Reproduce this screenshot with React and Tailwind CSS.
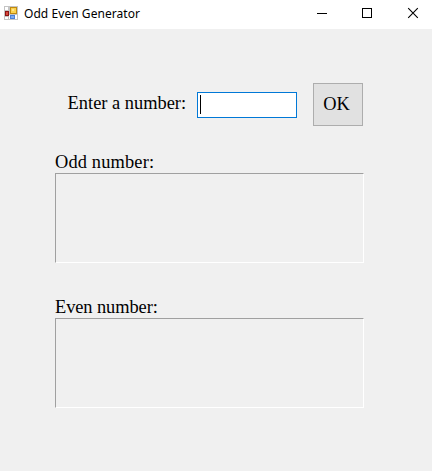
function AppIcon() {
  return (
    <svg className="block h-4 w-4" viewBox="0 0 16 16" shapeRendering="crispEdges">
      <rect x="0" y="0" width="14" height="14" fill="#c4c4c4" />
      <rect x="1" y="1" width="3" height="3" fill="#fff" />
      <rect x="1" y="11" width="3" height="2" fill="#fff" />
      <rect x="5" y="9" width="1" height="4" fill="#fff" />
      <rect x="11" y="9" width="2" height="4" fill="#fff" />
      <rect x="1" y="5" width="4" height="5" fill="#8c1414" />
      <rect x="2" y="6" width="2" height="3" fill="#d8483c" />
      <rect x="6" y="1" width="7" height="7" fill="#c08a10" />
      <rect x="7" y="2" width="5" height="5" fill="#fbd24e" />
      <rect x="8" y="3" width="2" height="2" fill="#ffe68a" />
      <rect x="6" y="9" width="5" height="4" fill="#4a80d8" />
      <rect x="7" y="10" width="3" height="2" fill="#7faaf0" />
    </svg>
  );
}

function TitleBar() {
  return (
    <header className="flex h-[29px] items-start bg-white">
      <div className="pt-[6px] pl-1">
        <AppIcon />
      </div>
      <h1 className="ml-1 flex-1 pt-[5px] font-['Noto_Sans','Open_Sans',sans-serif] text-[12px] leading-[17px] tracking-[0.06px] whitespace-nowrap text-black">
        Odd Even Generator
      </h1>
      <svg className="block h-[29px] w-[132px]" viewBox="0 0 132 29" fill="none" stroke="#000">
        <path d="M17 13.5h10" shapeRendering="crispEdges" />
        <path d="M62.5 8.5h9v9h-9z" shapeRendering="crispEdges" />
        <path d="M108.2 8.2l9.6 9.6M117.8 8.2l-9.6 9.6" strokeWidth="1.1" />
      </svg>
    </header>
  );
}

function ResultBox({ label, className, labelClassName }) {
  return (
    <section className={className}>
      <h2 className={`h-[21px] leading-[21px] whitespace-nowrap ${labelClassName}`}>{label}</h2>
      <div className="h-[90px] w-[309px] border border-t-[#a0a0a0] border-r-white border-b-white border-l-[#a0a0a0]" />
    </section>
  );
}

export default function App() {
  return (
    <div className="h-[471px] w-[432px] overflow-hidden bg-[#f0f0f0] font-['Liberation_Serif',serif] text-[18.4px] text-black">
      <TitleBar />
      <main className="pt-[54px] pl-[55px]">
        <div className="flex h-[43px] items-start">
          <label className="mt-[10px] ml-[12.6px] w-[129.4px] leading-[21px] whitespace-nowrap">Enter a number:</label>
          <div className="mt-[9px] h-[26px] w-[100px] border border-[#0078d7] bg-white pt-[2px] pl-[2px]">
            <div className="h-[19px] w-px bg-black" />
          </div>
          <button className="ml-4 flex h-[43px] w-[50px] items-center justify-center border border-[#adadad] bg-[#e1e1e1] pr-[3px] leading-[21px]">
            OK
          </button>
        </div>
        <ResultBox label="Odd number:" className="mt-[26px]" labelClassName="tracking-[0.15px]" />
        <ResultBox label="Even number:" className="mt-[34px]" labelClassName="tracking-[-0.08px]" />
      </main>
    </div>
  );
}
